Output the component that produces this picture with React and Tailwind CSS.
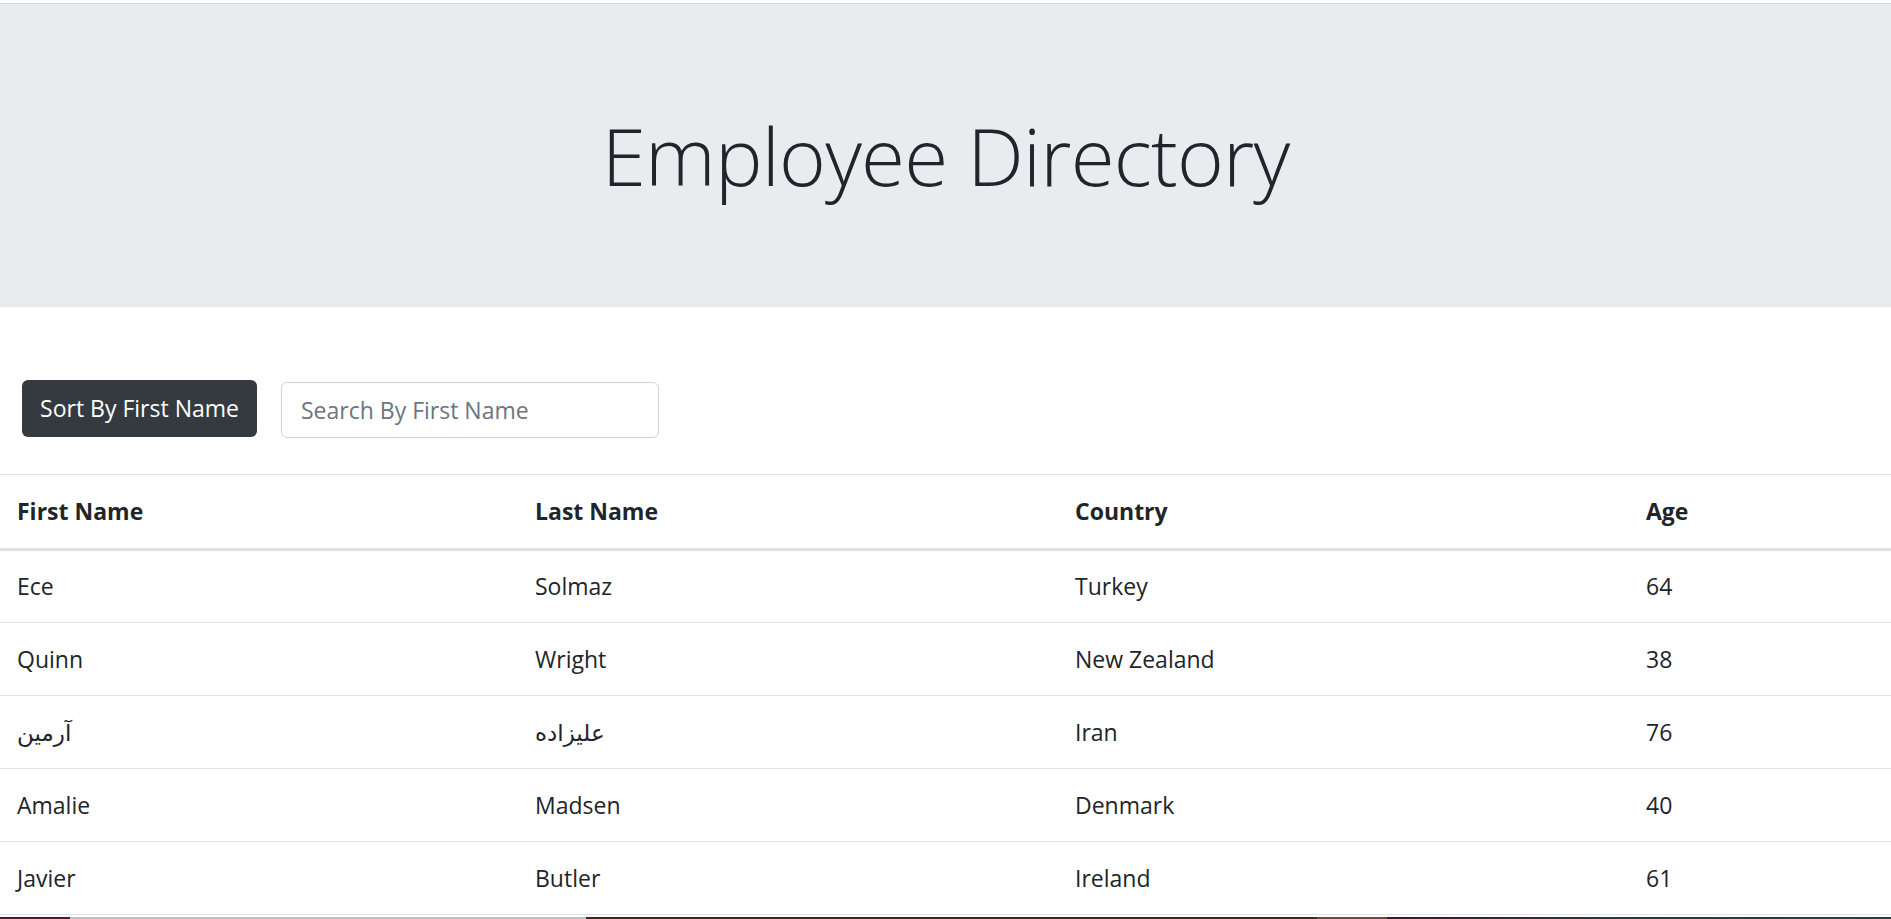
const ROWS = [
  { first: 'Ece', last: 'Solmaz', country: 'Turkey', age: 64 },
  { first: 'Quinn', last: 'Wright', country: 'New Zealand', age: 38 },
  { first: 'آرمین', last: 'علیزاده', country: 'Iran', age: 76 },
  { first: 'Amalie', last: 'Madsen', country: 'Denmark', age: 40 },
  { first: 'Javier', last: 'Butler', country: 'Ireland', age: 61 },
]

export default function App() {
  return (
    <div className="min-h-screen bg-white text-[#212529] font-['Open_Sans','Noto_Sans','DejaVu_Sans',sans-serif]">
      <div className="h-[3px] bg-white" />
      <div className="border-t border-[#d6d8db] bg-[#e9ecef] h-[304px] flex items-center justify-center">
        <h1 className="text-[80px] font-light leading-none text-[#212529] tracking-[-0.8px] pb-[2px]">Employee Directory</h1>
      </div>

      <div className="flex items-start pl-[22px] pt-[73px] gap-[24px]">
        <button className="h-[57px] w-[235px] bg-[#343a40] text-white rounded-[6px] text-[23px]">
          Sort By First Name
        </button>
        <input
          placeholder="Search By First Name"
          className="mt-[2px] h-[56px] w-[378px] border border-[#ced4da] rounded-[6px] px-[19px] text-[23px] placeholder:text-[#6c757d] outline-none"
        />
      </div>

      <table className="mt-[36px] w-full border-collapse text-[23px] text-left">
        <thead>
          <tr>
            <th className="w-[517px] border-t border-[#dee2e6] border-b-[3px] border-b-[#dee2e6] px-[17px] h-[75px] font-bold">First Name</th>
            <th className="w-[540px] border-t border-[#dee2e6] border-b-[3px] border-b-[#dee2e6] px-[18px] font-bold">Last Name</th>
            <th className="w-[571px] border-t border-[#dee2e6] border-b-[3px] border-b-[#dee2e6] px-[18px] font-bold">Country</th>
            <th className="border-t border-[#dee2e6] border-b-[3px] border-b-[#dee2e6] px-[18px] font-bold">Age</th>
          </tr>
        </thead>
        <tbody>
          {ROWS.map((r, i) => (
            <tr key={i} className="border-b border-[#dee2e6]">
              <td className="h-[73px] px-[17px]">{r.first}</td>
              <td className="px-[18px]">{r.last}</td>
              <td className="px-[18px]">{r.country}</td>
              <td className="px-[18px]">{r.age}</td>
            </tr>
          ))}
        </tbody>
      </table>

      {/* taskbar edge peeking in at the very bottom */}
      <div className="fixed left-0 right-0 bottom-0 h-[2px] flex">
        <div className="w-[70px] bg-[#4a1f2e]" />
        <div className="w-[516px] bg-[#c0c0c0]" />
        <div className="w-[731px] bg-[#3f2a22]" />
        <div className="w-[70px] bg-[#6b4a44]" />
        <div className="flex-1 bg-gradient-to-r from-[#3a1a25] via-[#253a40] to-[#2a4045]" />
      </div>
    </div>
  )
}
